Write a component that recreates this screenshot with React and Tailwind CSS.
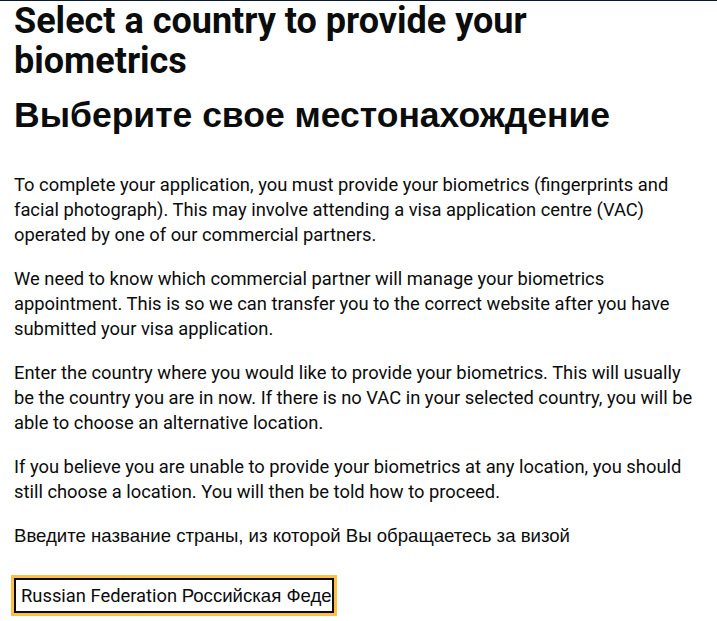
const latin = "font-['Roboto',_'Liberation_Sans',_sans-serif]"
const cyr = "font-['Liberation_Sans',_Arial,_sans-serif]"

const paragraphs = [
  'To complete your application, you must provide your biometrics (fingerprints and facial photograph). This may involve attending a visa application centre (VAC) operated by one of our commercial partners.',
  'We need to know which commercial partner will manage your biometrics appointment. This is so we can transfer you to the correct website after you have submitted your visa application.',
  'Enter the country where you would like to provide your biometrics. This will usually be the country you are in now. If there is no VAC in your selected country, you will be able to choose an alternative location.',
  'If you believe you are unable to provide your biometrics at any location, you should still choose a location. You will then be told how to proceed.',
]

export default function App() {
  return (
    <div className="min-h-screen bg-white text-[#0b0c0c]">
      <div className="h-px bg-[#0b1a2e]" />
      <main className="ml-[14px] max-w-[686px]">
        <h1 className={`${latin} text-[36px] leading-[40px] font-bold`}>
          Select a country to provide your biometrics
        </h1>
        <h1 className={`${cyr} mt-[14px] text-[35.5px] leading-[40px] font-bold`}>
          Выберите свое местонахождение
        </h1>

        <div className={`${latin} mt-[37px] text-[18.35px] leading-[25px]`}>
          {paragraphs.map(p => (
            <p key={p} className="mb-[19px]">{p}</p>
          ))}
        </div>

        <label htmlFor="country" className={`${cyr} block text-[18.6px] leading-[25px]`}>
          Введите название страны, из которой Вы обращаетесь за визой
        </label>

        <div
          id="country"
          className="mt-[30px] flex h-[35px] w-[320px] items-center overflow-hidden whitespace-nowrap border-2 border-[#0b0c0c] pl-[5px] outline-3 outline-[#ffbf47]"
        >
          <span className={`${latin} text-[18.35px]`}>Russian Federation&nbsp;</span>
          <span className={`${cyr} text-[18.6px]`}>Российская Федерация</span>
        </div>
      </main>
    </div>
  )
}
